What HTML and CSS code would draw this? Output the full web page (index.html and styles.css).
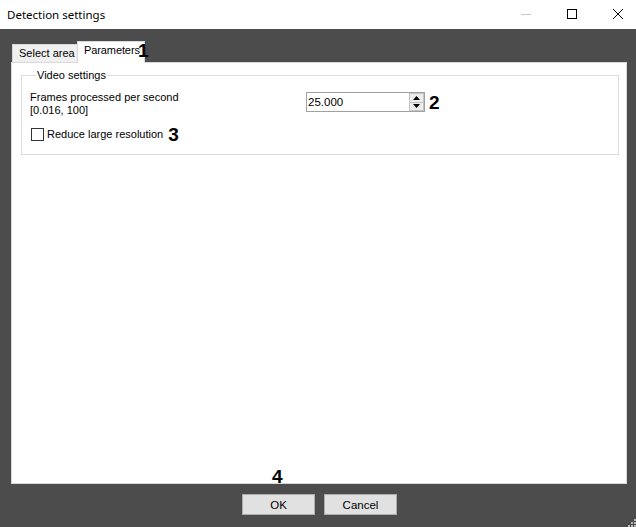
FILE: index.html
```html
<!DOCTYPE html>
<html>
<head>
  <title>Detection settings</title>
  <link rel="stylesheet" href="styles.css">
</head>
<body>
  <div class="titlebar">
    <span class="title">Detection settings</span>
    <div class="caption-buttons">
      <div class="cap-btn">
        <svg width="10" height="10" viewBox="0 0 10 10"><path d="M0 5.5h10" stroke="#c8c8c8" stroke-width="1"/></svg>
      </div>
      <div class="cap-btn">
        <svg width="10" height="10" viewBox="0 0 10 10"><rect x="0.5" y="0.5" width="9" height="9" fill="none" stroke="#000" stroke-width="1"/></svg>
      </div>
      <div class="cap-btn">
        <svg width="10" height="10" viewBox="0 0 10 10"><path d="M0 0L10 10M10 0L0 10" stroke="#000" stroke-width="1"/></svg>
      </div>
    </div>
  </div>

  <div class="dialog">
    <div class="tabs">
      <div class="tab">Select area</div>
      <div class="tab active">Parameters</div>
      <span class="mark mark-1">1</span>
    </div>
    <div class="panel">
      <fieldset class="group">
        <legend>Video settings</legend>
        <div class="row">
          <div class="label">Frames processed per second<br>[0.016, 100]</div>
          <div class="numeric">
            <span class="value">25.000</span>
            <div class="spin">
              <div class="spin-half"><svg width="7" height="4" viewBox="0 0 7 4"><path d="M3.5 0L7 4H0z" fill="#000"/></svg></div>
              <div class="spin-half"><svg width="7" height="4" viewBox="0 0 7 4"><path d="M0 0H7L3.5 4z" fill="#000"/></svg></div>
            </div>
          </div>
          <span class="mark">2</span>
        </div>
        <div class="check-row">
          <span class="checkbox"></span>
          <span class="check-label">Reduce large resolution</span>
          <span class="mark">3</span>
        </div>
      </fieldset>
    </div>
    <div class="footer">
      <span class="mark mark-4">4</span>
      <button class="btn">OK</button>
      <button class="btn">Cancel</button>
    </div>
  </div>

  <div class="grip">
    <i style="left: 6px; top: 0;"></i>
    <i style="left: 3px; top: 3px;"></i>
    <i style="left: 6px; top: 3px;"></i>
    <i style="left: 0; top: 6px;"></i>
    <i style="left: 3px; top: 6px;"></i>
    <i style="left: 6px; top: 6px;"></i>
  </div>
</body>
</html>
```

FILE: styles.css
```css
html, body {
  margin: 0;
  width: 636px;
  height: 527px;
  overflow: hidden;
}
body {
  background-color: #4c4c4c;
  font-family: "Liberation Sans", Arial, sans-serif;
  font-size: 11px;
  color: #000;
  position: relative;
}
.titlebar {
  height: 29px;
  background: #fff;
  display: flex;
  align-items: center;
  justify-content: space-between;
}
.title {
  font-family: "Noto Sans", "Open Sans", sans-serif;
  font-size: 11.5px;
  margin-left: 7px;
  margin-top: -1px;
}
.caption-buttons {
  display: flex;
  margin-right: -5px;
  height: 29px;
}
.cap-btn {
  width: 46px;
  display: flex;
  align-items: center;
  justify-content: center;
  margin-top: -2px;
}

.dialog {
  padding: 12px 9px 0 11px;
}
.tabs {
  position: relative;
  display: flex;
  align-items: flex-end;
  height: 21px;
  padding-left: 1px;
}
.tab {
  box-sizing: border-box;
  height: 18px;
  width: 66px;
  padding-left: 6px;
  line-height: 17px;
  background: #f0f0f0;
  border: 1px solid #d9d9d9;
  border-bottom: none;
}
.tab.active {
  position: relative;
  z-index: 1;
  height: 22px;
  width: 68px;
  margin-left: -1px;
  margin-bottom: -1px;
  padding-left: 6px;
  line-height: 16px;
  letter-spacing: -0.1px;
  background: #fff;
}
.mark {
  font-weight: bold;
  font-size: 19px;
  line-height: 19px;
}
.mark-1 {
  position: absolute;
  left: 127px;
  top: 0;
  z-index: 2;
}
.panel {
  box-sizing: border-box;
  height: 422px;
  background: #fff;
  border: 1px solid #d9d9d9;
  padding: 6px 7px 0 9px;
}
.group {
  margin: 0;
  padding: 9px 8px 12px 8px;
  border: 1px solid #dcdcdc;
}
.group legend {
  padding: 0 2px 0 1px;
  margin-left: 6px;
  line-height: 13px;
}
.row {
  display: flex;
  align-items: center;
  height: 26px;
}
.label {
  width: 276px;
  line-height: 13px;
}
.numeric {
  box-sizing: border-box;
  width: 119px;
  height: 20px;
  border: 1px solid #a0a0a0;
  display: flex;
  align-items: center;
  justify-content: space-between;
  margin-top: -4px;
}
.value {
  padding-left: 1px;
  font-size: 11.5px;
}
.spin {
  width: 15px;
  height: 18px;
  display: flex;
  flex-direction: column;
}
.spin-half {
  flex: 1;
  display: flex;
  align-items: center;
  justify-content: center;
  background: #ececec;
  border: 1px solid #c4c4c4;
}
.spin-half + .spin-half {
  border-top: none;
}
.row .mark {
  margin-left: 4px;
  margin-top: -4px;
}
.check-row {
  display: flex;
  align-items: center;
  margin-top: 10px;
  height: 15px;
}
.checkbox {
  box-sizing: border-box;
  width: 13px;
  height: 13px;
  border: 1px solid #333;
  background: #fff;
  margin-left: 1px;
}
.check-label {
  margin-left: 3px;
  margin-top: -1px;
}
.check-row .mark {
  margin-left: 5px;
}

.footer {
  position: relative;
  display: flex;
  justify-content: center;
  gap: 9px;
  margin-top: 10px;
  padding-left: 1px;
}
.mark-4 {
  position: absolute;
  left: 261px;
  top: -27px;
}
.btn {
  box-sizing: border-box;
  width: 73px;
  height: 21px;
  padding: 0;
  background: #e1e1e1;
  border: 1px solid #adadad;
  font-family: "Liberation Sans", Arial, sans-serif;
  font-size: 11.5px;
  color: #000;
}

.grip {
  position: absolute;
  right: 0;
  bottom: 0;
  width: 8px;
  height: 8px;
}
.grip i {
  position: absolute;
  width: 2px;
  height: 2px;
  background: #b8b8b8;
}
```
